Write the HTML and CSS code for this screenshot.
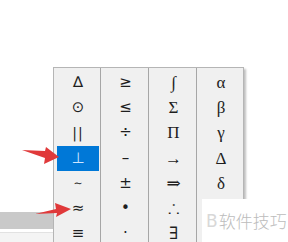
FILE: index.html
```html
<!DOCTYPE html>
<html lang="zh">
<head>
	<meta charset="utf-8">
	<title>符号面板</title>
	<link rel="stylesheet" href="styles.css">
</head>
<body>

	<div class="side">
		<div class="band"></div>
		<div class="strip"></div>
	</div>

	<div class="panel">
		<div class="kol">
			<span class="tegn">∆</span>
			<span class="tegn">⊙</span>
			<span class="tegn smal">||</span>
			<span class="tegn valgt">⊥</span>
			<span class="tegn lille">∼</span>
			<span class="tegn">≈</span>
			<span class="tegn">≡</span>
		</div>
		<div class="kol">
			<span class="tegn">≥</span>
			<span class="tegn">≤</span>
			<span class="tegn">÷</span>
			<span class="tegn">–</span>
			<span class="tegn">±</span>
			<span class="tegn">•</span>
			<span class="tegn">·</span>
		</div>
		<div class="kol serif">
			<span class="tegn">∫</span>
			<span class="tegn">Σ</span>
			<span class="tegn">Π</span>
			<span class="tegn">→</span>
			<span class="tegn">⇒</span>
			<span class="tegn">∴</span>
			<span class="tegn">∃</span>
		</div>
		<div class="kol serif">
			<span class="tegn">α</span>
			<span class="tegn">β</span>
			<span class="tegn">γ</span>
			<span class="tegn">Δ</span>
			<span class="tegn">δ</span>
			<span class="tegn"></span>
			<span class="tegn"></span>
		</div>
	</div>

	<!-- pile -->
	<svg class="pile" width="288" height="242" viewBox="0 0 288 242">
		<polygon points="22,150 45,151 46,147 59,157 44,164 45,158" fill="#e0393a" />
		<polygon points="35,214 56,209 55,203 71,209 56,217 57,213" fill="#e0393a" />
	</svg>

	<div class="maerke">
		<span class="logo">B</span>
		<span class="tekst">软件技巧</span>
	</div>

</body>
</html>
```

FILE: styles.css
```css
body {
	margin: 0;
	width: 288px;
	height: 242px;
	overflow: hidden;
	background-color: #fff;
	position: relative;
	font-family: 'DejaVu Sans', sans-serif;
}

.side {
	padding-top: 212px;
}

.band {
	height: 17px;
	background-color: #c9c9c9;
}

.strip {
	height: 9px;
	margin-top: 3px;
	background-color: #f4f4f4;
	border-top: 1px solid #e2e2e2;
}

.panel {
	position: absolute;
	left: 53px;
	top: 67px;
	width: 189px;
	height: 174px;
	overflow: hidden;
	display: grid;
	grid-template-columns: 46px 48px 48px 47px;
	background-color: #f0f0f0;
	border: 1px solid #b5b5b5;
	border-bottom: none;
	box-shadow: 2px 2px 2px rgba(0, 0, 0, 0.25);
}

.kol {
	display: flex;
	flex-direction: column;
	padding-top: 2px;
}

.kol + .kol {
	border-left: 1px solid #a6a6a6;
}

.tegn {
	flex: none;
	height: 25.2px;
	margin: 0 1px 0 3px;
	display: flex;
	align-items: center;
	justify-content: center;
	font-size: 15px;
	line-height: 1;
	color: #1e1e1e;
}

.smal {
	font-size: 14px;
	letter-spacing: 1px;
}

.lille {
	font-size: 11px;
}

.valgt {
	background-color: #0078d7;
	color: #cfe6ff;
}

.serif .tegn {
	font-family: 'Liberation Serif', 'DejaVu Serif', serif;
	font-size: 17px;
}

.pile {
	position: absolute;
	left: 0;
	top: 0;
}

.maerke {
	position: absolute;
	left: 202px;
	top: 199px;
	width: 86px;
	height: 43px;
	background-color: #fff;
	display: flex;
	align-items: center;
	padding-left: 4px;
	gap: 1px;
	color: #bcbcbc;
}

.logo {
	font-family: 'DejaVu Sans', sans-serif;
	font-size: 17px;
	color: #d8d8d8;
}

.tekst {
	font-family: 'Noto Sans CJK SC', sans-serif;
	font-size: 17px;
	font-weight: 300;
}
```
